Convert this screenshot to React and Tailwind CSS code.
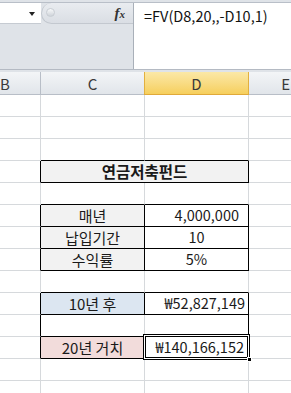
import React from "react";

const font = { fontFamily: '"Noto Sans CJK KR", "Noto Sans", sans-serif' };

function Row({ cells }) {
  return <div className="flex h-[22px]">{cells}</div>;
}

const GR = "border-r-[#d6d9dc]";
const GB = "border-b-[#d6d9dc]";

function EmptyRow({ cBottom = GB, dBottom = GB, cRight = GR, dRight = GR }) {
  return (
    <Row
      cells={
        <>
          <div className={`w-[41px] border-r border-b ${GR} ${GB}`} />
          <div className={`w-[104px] border-r border-b ${cRight} ${cBottom}`} />
          <div className={`w-[104px] border-r border-b ${dRight} ${dBottom}`} />
          <div className={`flex-1 border-b ${GB}`} />
        </>
      }
    />
  );
}

function DataRow({ label, value, labelBg, valueAlign, selected }) {
  return (
    <Row
      cells={
        <>
          <div className={`w-[41px] border-r border-b border-r-black ${GB}`} />
          <div
            className={`w-[104px] border-r border-b border-r-black border-b-black flex items-center justify-center text-[15px] ${labelBg}`}
          >
            {label}
          </div>
          <div
            className={`relative w-[104px] border-r border-b border-r-black border-b-black flex items-center text-[14.5px] ${valueAlign}`}
          >
            {value}
            {selected && (
              <div className="absolute left-[-2px] top-[-3px] w-[107px] h-[26px] border border-black pointer-events-none">
                <div className="w-full h-full border border-white">
                  <div className="w-full h-full border border-black" />
                </div>
                <div className="absolute right-[-3px] bottom-[-3px] w-[5px] h-[5px] bg-black border border-white" />
              </div>
            )}
          </div>
          <div className={`flex-1 border-b ${GB}`} />
        </>
      }
    />
  );
}

export default function App() {
  return (
    <div
      className="w-[291px] h-[393px] overflow-hidden bg-white text-[#1a1a1a] text-[15px] leading-none"
      style={font}
    >
      {/* Top formula bar */}
      <div className="h-[70px] bg-[#dfe3e8] pt-[2px] border-b border-b-[#b4bac3]">
        <div className="flex h-[67px] border-t border-t-[#b9bfc8]">
          <div className="w-[133px] flex flex-col">
            <div className="flex h-[22px]">
              <div className="w-[41px] h-[21px] bg-white border-b border-b-[#c6cbd2] relative">
                <div className="absolute left-[29px] top-[9px] w-0 h-0 border-l-[3px] border-r-[3px] border-t-[4px] border-l-transparent border-r-transparent border-t-[#222]" />
              </div>
              <div className="flex-1 h-[21px] bg-gradient-to-b from-[#e9ecf0] to-[#dadee4] border-l border-b border-[#c3c8cf] rounded-l-[11px] relative flex items-center justify-end pr-[8px]">
                <div className="absolute left-[4px] top-[5px] w-[9px] h-[9px] rounded-full bg-gradient-to-b from-[#f8f9fa] to-[#cfd4da] border border-[#c8cdd3]" />
                <span
                  className="italic font-bold text-[15px] text-[#333]"
                  style={{ fontFamily: '"Liberation Serif", serif' }}
                >
                  f<span className="text-[11px]">x</span>
                </span>
              </div>
            </div>
            <div className="flex-1" />
          </div>
          <div className="flex-1 bg-white border-l border-l-[#a9b0b9] pl-[10px] pt-[6px] text-[14.5px] text-[#111]">
            =FV(D8,20,,-D10,1)
          </div>
        </div>
      </div>
      <div className="h-[2px] bg-[#dfe3e8]" />
      {/* Column headers */}
      <div className="flex h-[23px] text-[15px] text-[#3a3a3a]">
        <div className="w-[41px] border-r border-b border-r-[#b8bec7] border-b-[#b8bec7] bg-gradient-to-b from-[#f3f5f7] to-[#e1e5ea] flex items-center pl-[0px]">
          B
        </div>
        <div className="w-[104px] border-r border-b border-r-[#b8bec7] border-b-[#b8bec7] bg-gradient-to-b from-[#f3f5f7] to-[#e1e5ea] flex items-center justify-center">
          C
        </div>
        <div className="border-r border-b border-l border-l-[#e2b03f] border-r-[#e2b03f] border-b-[#e0a93a] -ml-[1px] w-[105px] bg-gradient-to-b from-[#fbe8a6] to-[#f6cf5c] flex items-center justify-center">
          D
        </div>
        <div className="flex-1 border-b border-b-[#b8bec7] bg-gradient-to-b from-[#f3f5f7] to-[#e1e5ea] flex items-center justify-end pr-[1px]">
          E
        </div>
      </div>
      {/* Grid */}
      <EmptyRow />
      <EmptyRow />
      <EmptyRow cBottom="border-b-black" dBottom="border-b-black" />
      <Row
        cells={
          <>
            <div className={`w-[41px] border-r border-b border-r-black ${GB}`} />
            <div className="w-[208px] border-r border-b border-r-black border-b-black bg-[#f2f2f2] flex items-center justify-center font-bold text-[15.5px]">
              연금저축펀드
            </div>
            <div className={`flex-1 border-b ${GB}`} />
          </>
        }
      />
      <EmptyRow cBottom="border-b-black" dBottom="border-b-black" />
      <DataRow label="매년" value="4,000,000" labelBg="bg-[#f2f2f2]" valueAlign="justify-end pr-[9px]" />
      <DataRow label="납입기간" value="10" labelBg="bg-[#f2f2f2]" valueAlign="justify-center" />
      <DataRow label="수익률" value="5%" labelBg="bg-[#f2f2f2]" valueAlign="justify-center" />
      <EmptyRow cBottom="border-b-black" dBottom="border-b-black" />
      <DataRow label="10년 후" value="₩52,827,149" labelBg="bg-[#dce6f1]" valueAlign="justify-end pr-[3px]" />
      <Row
        cells={
          <>
            <div className={`w-[41px] border-r border-b border-r-black ${GB}`} />
            <div className={`w-[104px] border-r border-b ${GR} border-b-black`} />
            <div className="w-[104px] border-r border-b border-r-black border-b-black" />
            <div className={`flex-1 border-b ${GB}`} />
          </>
        }
      />
      <DataRow label="20년 거치" value="₩140,166,152" labelBg="bg-[#f2dcdb]" valueAlign="justify-end pr-[4px]" selected />
      <EmptyRow />
      <EmptyRow />
    </div>
  );
}
